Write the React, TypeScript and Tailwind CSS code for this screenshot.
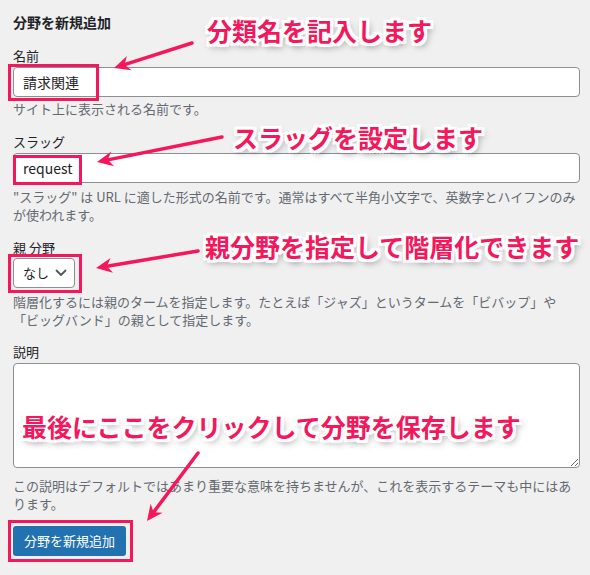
import React from "react";

const PINK = "#f5175b";

type Arrow = { x1: number; y1: number; x2: number; y2: number };

const arrows: Arrow[] = [
  { x1: 192, y1: 43, x2: 114, y2: 68 },
  { x1: 222, y1: 137, x2: 97, y2: 162 },
  { x1: 198, y1: 251, x2: 96, y2: 268 },
  { x1: 198, y1: 453, x2: 147, y2: 521 },
];

function ArrowShape({ a }: { a: Arrow }) {
  const dx = a.x2 - a.x1;
  const dy = a.y2 - a.y1;
  const len = Math.sqrt(dx * dx + dy * dy);
  const ux = dx / len;
  const uy = dy / len;
  const nx = -uy;
  const ny = ux;
  const L = 16;
  const W = 7.5;
  const notch = 5;
  const bx = a.x2 - L * ux;
  const by = a.y2 - L * uy;
  const mx = a.x2 - (L - notch) * ux;
  const my = a.y2 - (L - notch) * uy;
  const pts = [
    [a.x2, a.y2],
    [bx + W * nx, by + W * ny],
    [mx, my],
    [bx - W * nx, by - W * ny],
  ]
    .map((p) => p.join(","))
    .join(" ");
  return (
    <g>
      <line x1={a.x1} y1={a.y1} x2={mx} y2={my} stroke={PINK} strokeWidth={3.5} strokeLinecap="round" />
      <polygon points={pts} fill={PINK} />
    </g>
  );
}

const annoCls =
  "absolute whitespace-nowrap text-[25px] leading-[30px] font-bold text-[#f5175b] [font-family:'Noto_Sans_CJK_JP','Noto_Sans',sans-serif] [text-shadow:2px_0_0_#fff,-2px_0_0_#fff,0_2px_0_#fff,0_-2px_0_#fff,2px_2px_0_#fff,-2px_-2px_0_#fff,2px_-2px_0_#fff,-2px_2px_0_#fff,3px_0_0_#fff,-3px_0_0_#fff,0_3px_0_#fff,0_-3px_0_#fff,3px_3px_1px_#fff,-3px_-3px_1px_#fff,3px_-3px_1px_#fff,-3px_3px_1px_#fff,3px_4px_7px_rgba(0,0,0,0.4),-1px_2px_6px_rgba(0,0,0,0.25)]";

const labelCls = "text-[13px] leading-[18px]";
const helpCls = "text-[13px] leading-[18px] text-[#646970]";
const boxCls = "absolute border-[3px] border-[#f5175b]";

export default function App() {
  return (
    <div className="relative h-[575px] w-[590px] overflow-hidden bg-[#f0f0f1] text-[#1d2327] [font-family:'Noto_Sans_CJK_JP','Noto_Sans',sans-serif]">
      <form className="flex flex-col gap-[15px] pl-[13px] pr-[10px] pt-[12px]">
        <h2 className="text-[14px] leading-[20px] font-semibold">分野を新規追加</h2>

        <div className="flex flex-col gap-[2px]">
          <div className={labelCls}>名前</div>
          <div className="h-[30px] w-full rounded-[4px] border border-[#8c8f94] bg-white px-[9px] text-[14px] leading-[28px]">
            請求関連
          </div>
          <div className={helpCls + " mt-[1px]"}>サイト上に表示される名前です。</div>
        </div>

        <div className="flex flex-col gap-[2px]">
          <div className={labelCls}>スラッグ</div>
          <div className="h-[30px] w-full rounded-[4px] border border-[#8c8f94] bg-white px-[9px] text-[14px] leading-[28px]">
            request
          </div>
          <div className={helpCls + " mt-[3px]"}>
            <div className="whitespace-nowrap">"スラッグ" は URL に適した形式の名前です。通常はすべて半角小文字で、英数字とハイフンのみ</div>
            <div className="whitespace-nowrap">が使われます。</div>
          </div>
        </div>

        <div className="flex flex-col items-start gap-[1px]">
          <div className={labelCls}>親 分野</div>
          <div className="flex h-[30px] w-[62px] items-center justify-between rounded-[4px] border border-[#8c8f94] bg-white pl-[9px] pr-[7px] text-[13px]">
            <span>なし</span>
            <svg width="12" height="8" viewBox="0 0 12 8" fill="none">
              <path d="M1.5 1.5 L6 6 L10.5 1.5" stroke="#50575e" strokeWidth="1.8" strokeLinecap="round" strokeLinejoin="round" />
            </svg>
          </div>
          <div className={helpCls + " mt-[4px]"}>
            <div className="whitespace-nowrap">階層化するには親のタームを指定します。たとえば「ジャズ」というタームを「ビバップ」や</div>
            <div className="whitespace-nowrap">「ビッグバンド」の親として指定します。</div>
          </div>
        </div>

        <div className="-mt-[1px] flex flex-col gap-[2px]">
          <div className={labelCls}>説明</div>
          <textarea
            readOnly
            className="block h-[105px] w-full rounded-[4px] border border-[#8c8f94] bg-white"
          />
          <div className={helpCls + " mt-[7px]"}>
            <div className="whitespace-nowrap">この説明はデフォルトではあまり重要な意味を持ちませんが、これを表示するテーマも中にはあ</div>
            <div className="whitespace-nowrap">ります。</div>
          </div>
        </div>

        <div className="-mt-[2px] flex h-[30px] w-[113px] items-center justify-center rounded-[3px] bg-[#2271b1] text-[13px] text-white">
          分野を新規追加
        </div>
      </form>

      {/* red highlight boxes */}
      <div className={boxCls + " left-[8px] top-[64px] h-[37px] w-[91px]"} />
      <div className={boxCls + " left-[13px] top-[155px] h-[30px] w-[69px]"} />
      <div className={boxCls + " left-[8px] top-[254px] h-[39px] w-[74px]"} />
      <div className={boxCls + " left-[8px] top-[520px] h-[42px] w-[125px]"} />

      {/* arrows */}
      <svg className="absolute left-0 top-0" width="590" height="575" viewBox="0 0 590 575">
        {arrows.map((a, i) => (
          <ArrowShape key={i} a={a} />
        ))}
      </svg>

      {/* annotations */}
      <div className={annoCls + " left-[207px] top-[15px]"}>分類名を記入します</div>
      <div className={annoCls + " left-[233px] top-[122px]"}>スラッグを設定します</div>
      <div className={annoCls + " left-[205px] top-[231px]"}>親分野を指定して階層化できます</div>
      <div className={annoCls + " left-[22px] top-[411px]"}>最後にここをクリックして分野を保存します</div>
    </div>
  );
}
